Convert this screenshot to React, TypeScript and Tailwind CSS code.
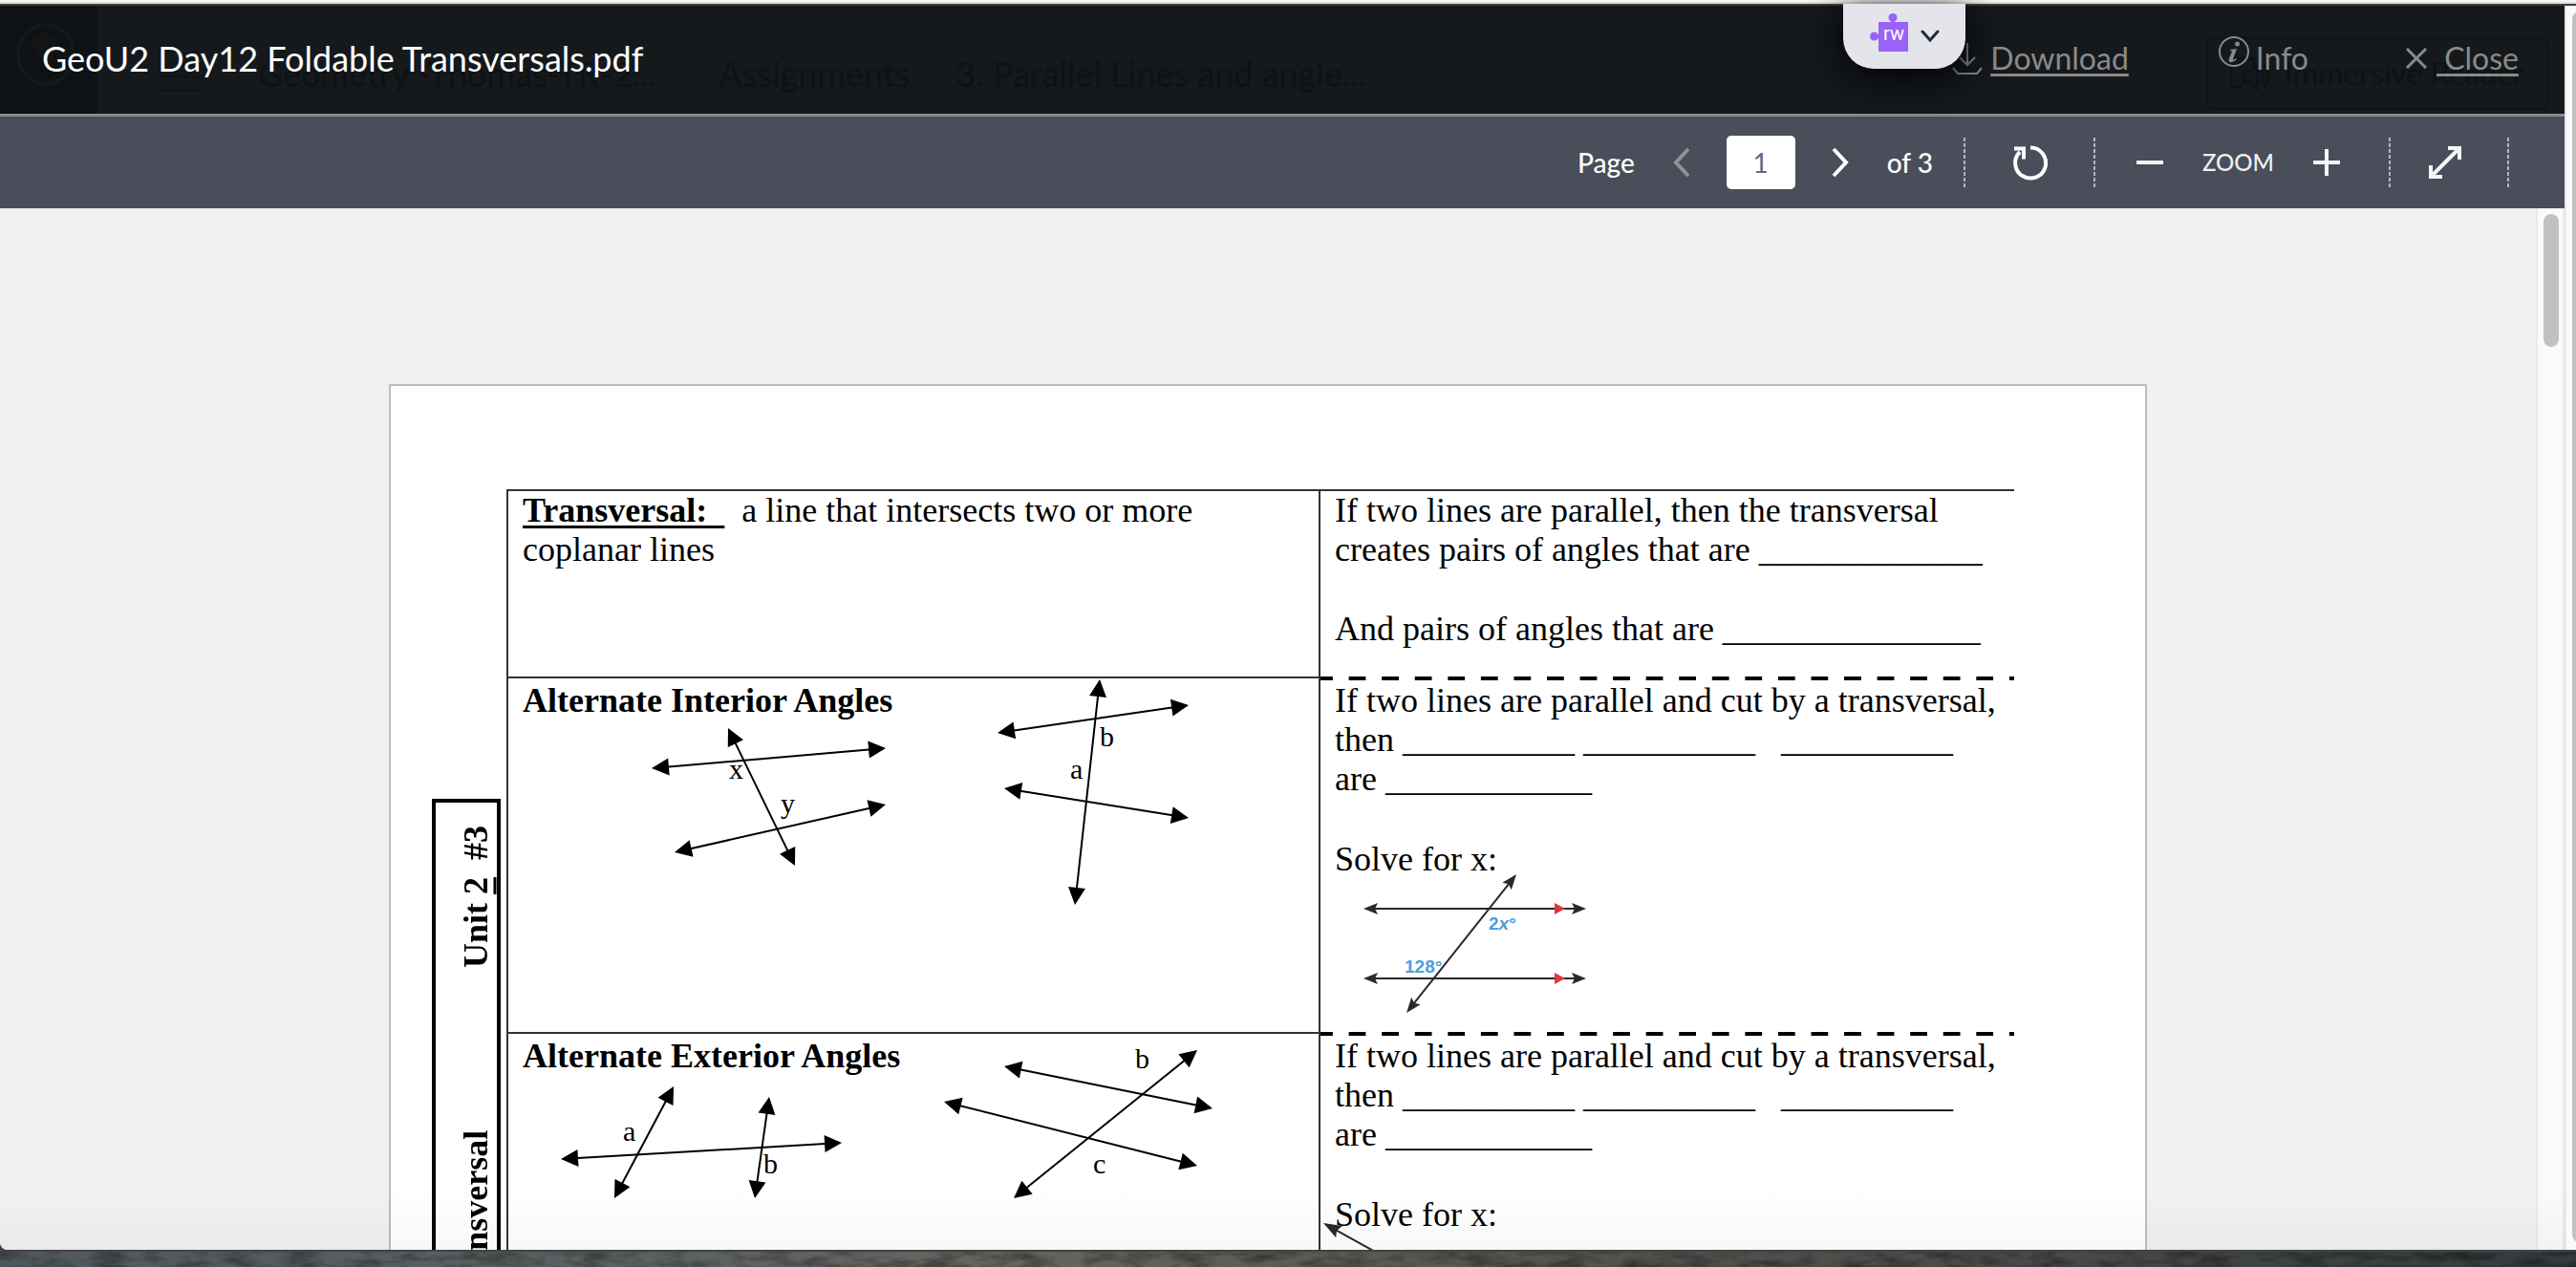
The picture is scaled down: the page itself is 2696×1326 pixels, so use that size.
import type { ReactNode } from "react";

type Point = [number, number];

/** A line with a filled arrowhead at each end. */
function Arrow({
  from,
  to,
  head = 18,
  half = 9,
  color = "#000",
  notch = 0,
}: {
  from: Point;
  to: Point;
  head?: number;
  half?: number;
  color?: string;
  notch?: number;
}) {
  const dx = to[0] - from[0];
  const dy = to[1] - from[1];
  const len = Math.hypot(dx, dy);
  const ux = dx / len;
  const uy = dy / len;
  const tip = (p: Point, s: number) =>
    [
      p,
      [p[0] + s * ux * head - uy * half, p[1] + s * uy * head + ux * half],
      [p[0] + s * ux * (head - notch), p[1] + s * uy * (head - notch)],
      [p[0] + s * ux * head + uy * half, p[1] + s * uy * head - ux * half],
    ]
      .map((q) => q.join(","))
      .join(" ");
  return (
    <g fill={color} stroke="none">
      <line
        x1={from[0] + (ux * head) / 2}
        y1={from[1] + (uy * head) / 2}
        x2={to[0] - (ux * head) / 2}
        y2={to[1] - (uy * head) / 2}
        stroke={color}
        strokeWidth="2"
      />
      <polygon points={tip(from, 1)} />
      <polygon points={tip(to, -1)} />
    </g>
  );
}

function Label({ x, y, children }: { x: number; y: number; children: ReactNode }) {
  return (
    <text x={x} y={y} fontSize="30">
      {children}
    </text>
  );
}

function Dashes() {
  return (
    <div className="h-1 bg-[linear-gradient(to_right,#000_0_36%,transparent_36%_86%,#000_86%)] bg-[length:calc(100%/21)_4px] bg-repeat-x" />
  );
}

function Divider() {
  return (
    <div className="h-[52px] w-0.5 shrink-0 bg-[repeating-linear-gradient(to_bottom,#b4b7bd_0_4px,transparent_4px_6px)]" />
  );
}

function Cut() {
  return (
    <>
      <p>If two lines are parallel and cut by a transversal,</p>
      <p className="whitespace-pre">then __________ __________&nbsp;&nbsp; __________</p>
      <p>are ____________</p>
      <p className="mt-[43px]">Solve for x:</p>
    </>
  );
}

function Ghost() {
  return (
    <div aria-hidden="true" className="absolute inset-0 flex items-center text-[#0e1214]">
      <div className="flex h-full w-[102px] items-center bg-[#0e1214] pb-3 pl-[17px]">
        <svg width="62" height="66" viewBox="0 0 62 66" fill="none">
          <ellipse cx="31" cy="33" rx="29" ry="31" stroke="#14181a" strokeWidth="4" />
          <path d="M17 14q14-10 24 2l2 14-8 10-12-4-8-10z" fill="#131416" />
        </svg>
      </div>
      <svg className="ml-[60px] mt-9" width="48" height="32" viewBox="0 0 48 32" fill="#101518">
        <path d="M0 0h48v3H0zM0 14h48v3H0zM0 28h48v3H0z" />
      </svg>
      <div className="ml-[60px] mt-7 flex flex-1 items-center text-4xl">
        <span>Geometry -Thomas-TR-2...</span>
        <svg className="ml-9 mr-[19px]" width="10" height="18" viewBox="0 0 10 18" fill="none" stroke="currentColor">
          <path d="M1 1l8 8-8 8" />
        </svg>
        <span>Assignments</span>
        <svg className="mx-[19px]" width="10" height="18" viewBox="0 0 10 18" fill="none" stroke="currentColor">
          <path d="M1 1l8 8-8 8" />
        </svg>
        <span>3. Parallel Lines and angle...</span>
      </div>
      <div className="mr-[17px] mt-7 flex h-[76px] w-[358px] items-center gap-4 rounded-lg border-2 border-[#101417] pl-[22px] text-[32px]">
        <svg width="42" height="36" viewBox="0 0 42 36" fill="none" stroke="currentColor" strokeWidth="3">
          <path d="M20 2H2v30h12M20 2h6v8M16 16h6l7-7v25l-7-7h-6zM33 14q5 7 0 14M37 10q8 11 0 22" />
        </svg>
        Immersive Reader
      </div>
    </div>
  );
}

function Header() {
  return (
    <header className="relative flex h-[116px] shrink-0 items-center justify-between border-b-[3px] border-[#8b8a87] bg-[#15191c] pb-1 pl-11 pr-12">
      <Ghost />
      <h1 className="relative text-4xl text-white">GeoU2 Day12 Foldable Transversals.pdf</h1>
      <nav className="relative flex items-center text-[32px] text-[#8b8a8a]">
        <a href="#download" className="flex items-center gap-2">
          <svg width="32" height="34" viewBox="0 0 32 34" fill="none" stroke="currentColor" strokeWidth="2">
            <path d="M16 1v23M8 16l8 8 8-8M1 27l5 6h20l5-6" />
          </svg>
          <span className="underline decoration-[3px] underline-offset-4">Download</span>
        </a>
        <button type="button" className="ml-[94px] flex items-center gap-1.5">
          <svg className="mb-3" width="33" height="33" viewBox="0 0 33 33" fill="none">
            <circle cx="16" cy="16" r="15" stroke="currentColor" strokeWidth="2" />
            <circle cx="19.500" cy="8" r="2.500" fill="currentColor" />
            <path d="M12 14l7-1-4 11q0 1.500 3-1l1 1q-4 4-7 3-2-1-1-4l3-7q0-1-2-1z" fill="currentColor" />
          </svg>
          Info
        </button>
        <a href="#close" className="ml-[102px] flex items-center gap-2.5">
          <svg width="22" height="22" viewBox="0 0 22 22" fill="none" stroke="currentColor" strokeWidth="3">
            <path d="M1 1l20 20M21 1L1 21" />
          </svg>
          <span className="whitespace-pre underline decoration-[3px] underline-offset-4"> Close</span>
        </a>
      </nav>
    </header>
  );
}

function Toolbar() {
  return (
    <div className="flex h-24 shrink-0 items-center justify-end bg-[#494e5a] pr-[58px] text-[28px] font-medium text-white">
      <label htmlFor="page">Page</label>
      <button type="button" aria-label="Previous page" className="ml-10 text-[#8f9298]">
        <svg width="18" height="32" viewBox="0 0 18 32" fill="none" stroke="currentColor" strokeWidth="4">
          <path d="M16 2L3 16l13 14" />
        </svg>
      </button>
      <input
        id="page"
        defaultValue="1"
        className="mx-[38px] h-14 w-[72px] rounded-[5px] bg-white text-center text-[28px] font-normal text-[#5b6b7b]"
      />
      <button type="button" aria-label="Next page">
        <svg width="18" height="32" viewBox="0 0 18 32" fill="none" stroke="currentColor" strokeWidth="4">
          <path d="M2 2l13 14L2 30" />
        </svg>
      </button>
      <span className="ml-10 mr-8">of 3</span>
      <Divider />
      <button type="button" aria-label="Rotate" className="ml-[50px] mr-12">
        <svg width="36" height="38" viewBox="0 0 36 38" fill="none" stroke="currentColor" strokeWidth="4">
          <path d="M18 3.500A16 16 0 1 1 7 8" />
          <path d="M1 4.500h10v11" />
        </svg>
      </button>
      <Divider />
      <button type="button" aria-label="Zoom out" className="ml-[43px]">
        <svg width="28" height="28" viewBox="0 0 28 28" fill="#f5f5f5">
          <path d="M0 12h28v4H0z" />
        </svg>
      </button>
      <span className="mx-[41px] text-2xl text-[#f0f0f0]">ZOOM</span>
      <button type="button" aria-label="Zoom in" className="mr-[51px]">
        <svg width="28" height="28" viewBox="0 0 28 28" fill="#f5f5f5">
          <path d="M0 12h12V0h4v12h12v4H16v12h-4V16H0z" />
        </svg>
      </button>
      <Divider />
      <button type="button" aria-label="Full screen" className="ml-10 mr-12">
        <svg width="34" height="34" viewBox="0 0 34 34" fill="none" stroke="#f5f5f5" strokeWidth="4">
          <path d="M20 2h12v12M2 20v12h12M3 31L31 3" />
        </svg>
      </button>
      <Divider />
    </div>
  );
}

function Sheet() {
  return (
    <article className="mx-auto mt-[184px] flex min-h-[2400px] w-full max-w-[1840px] items-start border-2 border-[#b9bdc2] bg-white font-['Liberation_Serif',serif] text-4xl/[41px] text-black">
      <aside className="ml-[43px] mt-[432px] flex h-[1000px] w-[72px] rotate-180 items-center justify-end gap-[170px] border-4 border-black pb-6 pr-5 font-bold whitespace-pre [writing-mode:vertical-rl]">
        <span>Transversal</span>
        <span>
          Unit <u className="decoration-[3px] underline-offset-0">2</u>
          {"  #3"}
        </span>
      </aside>
      <table className="ml-1.5 mt-[108px] table-fixed border-separate border-spacing-0">
        <colgroup>
          <col className="w-[850px]" />
          <col className="w-[728px]" />
        </colgroup>
        <tbody className="align-top">
          <tr className="h-[196px]">
            <td className="border-l-2 border-t-2 border-[#333] p-0 pl-[15px]">
              <b className="whitespace-pre underline decoration-[3px] underline-offset-4">Transversal:  </b>
              <span className="whitespace-pre">{"  "}</span>a line that intersects two or more
              <br />
              coplanar lines
            </td>
            <td className="border-l-2 border-t-2 border-[#333] p-0 pl-[15px]">
              <p>If two lines are parallel, then the transversal</p>
              <p>creates pairs of angles that are _____________</p>
              <p className="mt-[42px]">And pairs of angles that are _______________</p>
            </td>
          </tr>
          <tr className="h-[372px]">
            <td className="border-l-2 border-t-2 border-[#333] p-0 pl-[15px]">
              <div className="flex items-start">
                <div className="w-[433px] pt-[3px]">
                  <h2 className="font-bold">Alternate Interior Angles</h2>
                  <svg width="400" height="160" viewBox="547 754 400 160">
                    <Arrow from={[682, 804]} to={[927, 783]} />
                    <Arrow from={[706, 892]} to={[927, 842]} />
                    <Arrow from={[762, 762]} to={[832, 906]} />
                    <Label x={763} y={815}>x</Label>
                    <Label x={817} y={851}>y</Label>
                  </svg>
                </div>
                <svg width="280" height="245" viewBox="980 710 280 245">
                  <Arrow from={[1044, 767]} to={[1244, 738]} />
                  <Arrow from={[1051, 825]} to={[1244, 856]} />
                  <Arrow from={[1151, 711]} to={[1125, 947]} />
                  <Label x={1151} y={781}>b</Label>
                  <Label x={1120} y={815}>a</Label>
                </svg>
              </div>
            </td>
            <td className="border-l-2 border-[#333] p-0">
              <Dashes />
              <div className="pl-[15px] pt-px">
                <Cut />
                <svg className="overflow-visible" width="280" height="145" viewBox="1397 920 280 145">
                  <Arrow from={[1427, 951]} to={[1660, 951]} head={15} half={6} notch={3} color="#2b2829" />
                  <Arrow from={[1427, 1024]} to={[1660, 1024]} head={15} half={6} notch={3} color="#2b2829" />
                  <Arrow from={[1587, 915]} to={[1472, 1060]} head={16} half={6} notch={3} color="#2b2829" />
                  <path d="M1627 945v12l11-6zM1627 1018v12l11-6z" fill="#e1353b" />
                  <g
                    fill="#4a9fe0"
                    fontSize="19"
                    fontWeight="700"
                    className="font-['Liberation_Sans_Narrow','Liberation_Sans',sans-serif]"
                  >
                    <text x="1558" y="973">
                      2<tspan fontStyle="italic">x</tspan>°
                    </text>
                    <text x="1470" y="1018">128°</text>
                  </g>
                </svg>
              </div>
            </td>
          </tr>
          <tr className="h-[372px]">
            <td className="border-l-2 border-t-2 border-[#333] p-0 pl-[15px]">
              <div className="flex items-start">
                <div className="w-[433px] pt-[3px]">
                  <h2 className="font-bold">Alternate Exterior Angles</h2>
                  <svg width="400" height="140" viewBox="547 1126 400 140">
                    <Arrow from={[587, 1213]} to={[881, 1196]} />
                    <Arrow from={[705, 1137]} to={[643, 1254]} />
                    <Arrow from={[805, 1148]} to={[790, 1254]} />
                    <Label x={652} y={1194}>a</Label>
                    <Label x={799} y={1228}>b</Label>
                  </svg>
                </div>
                <svg width="300" height="180" viewBox="980 1082 300 180">
                  <Arrow from={[1051, 1116]} to={[1269, 1160]} />
                  <Arrow from={[988, 1153]} to={[1253, 1220]} />
                  <Arrow from={[1253, 1099]} to={[1061, 1254]} />
                  <Label x={1188} y={1118}>b</Label>
                  <Label x={1144} y={1228}>c</Label>
                </svg>
              </div>
            </td>
            <td className="border-l-2 border-[#333] p-0">
              <Dashes />
              <div className="pl-[15px] pt-px">
                <Cut />
                <svg className="overflow-visible" width="280" height="100" viewBox="1397 1292 280 100">
                  <Arrow from={[1385, 1280]} to={[1540, 1366]} head={19} half={7} notch={3} color="#2b2829" />
                </svg>
              </div>
            </td>
          </tr>
        </tbody>
      </table>
    </article>
  );
}

function ExtensionTab() {
  return (
    <button
      type="button"
      aria-label="Open Read&Write toolbar"
      className="absolute right-[639px] top-1 flex h-[68px] w-32 items-start gap-3 rounded-b-[32px] bg-[#e4e5eb] pl-7 pt-2.5 shadow-[0_8px_40px_#000]"
    >
      <svg width="41" height="40" viewBox="0 0 41 40" fill="#9a63f7">
        <path d="M9 9h31v31H9z" />
        <circle cx="24" cy="4.500" r="4.500" />
        <path d="M22.500 6h3v4h-3zM6 22h4v4H6z" />
        <circle cx="4.500" cy="24" r="4.500" />
        <text x="14" y="28" fontSize="20" fill="#fff" className="font-['Roboto',sans-serif]">
          rw
        </text>
      </svg>
      <svg className="mt-4" width="20" height="16" viewBox="0 0 20 16" fill="none" stroke="#232a38" strokeWidth="3">
        <path d="M2 3l8 9 8-9" strokeLinecap="round" />
      </svg>
    </button>
  );
}

export default function App() {
  return (
    <div className="relative flex h-screen flex-col overflow-hidden bg-[#3d4144] font-['Lato',sans-serif]">
      <div className="h-0.5 shrink-0 bg-[#f7f7f2]" />
      <div className="h-0.5 shrink-0 bg-[#dfdedb]" />
      <div className="h-0.5 shrink-0 bg-[#3d3d3e]" />
      <div className="flex min-h-0 flex-1 overflow-hidden rounded-bl-lg bg-[#fafafa]">
        <div className="flex min-w-0 flex-1 flex-col">
          <Header />
          <Toolbar />
          <div className="relative flex min-h-0 flex-1">
            <main className="min-w-0 flex-1 overflow-hidden bg-[#f1f1f1]">
              <Sheet />
            </main>
            <div className="w-[30px] shrink-0 border-x-2 border-[#e9e9e9] bg-[#fafafa] pl-1.5 pt-1.5">
              <div className="h-[139px] w-4 rounded-full bg-[#c1c1c1]" />
            </div>
            <div className="pointer-events-none absolute inset-x-0 bottom-0 h-16 bg-linear-to-b from-transparent to-black/[0.03]" />
          </div>
        </div>
        <div className="w-3 shrink-0 overflow-hidden border-l-2 border-[#e9e9e9] pb-2 pl-1.5 pt-1.5">
          <div className="h-full w-4 rounded-full bg-[#c1c1c1]" />
        </div>
      </div>
      <div className="h-0.5 shrink-0 bg-[#434343]" />
      <div className="h-4 shrink-0 overflow-hidden bg-[linear-gradient(to_right,#4f595d,#5c6162_25%,#66645f_40%,#55534f_60%,#4c4c4a_75%,#343b3e)]">
        <svg className="h-full w-full" aria-hidden="true">
          <filter id="rock" x="0" y="0" width="100%" height="100%">
            <feTurbulence type="fractalNoise" baseFrequency="0.03 0.1" numOctaves="5" seed="4" />
            <feColorMatrix values="0 0 0 0 0  0 0 0 0 0  0 0 0 0 0  0.800 0 0 0 -0.300" />
          </filter>
          <rect width="100%" height="100%" filter="url(#rock)" />
        </svg>
      </div>
      <ExtensionTab />
    </div>
  );
}
